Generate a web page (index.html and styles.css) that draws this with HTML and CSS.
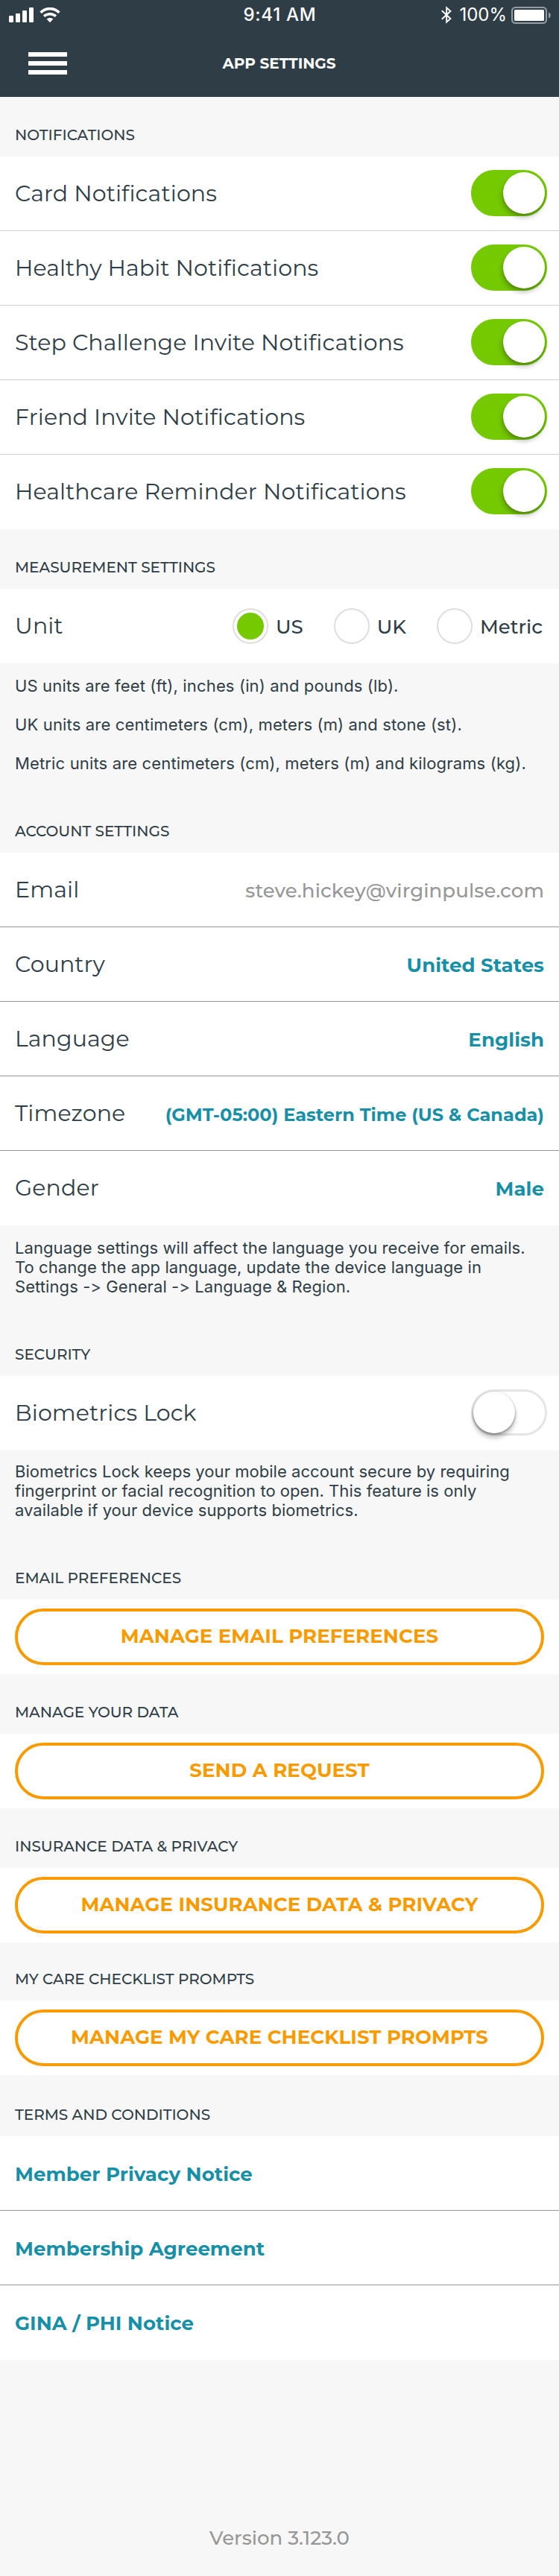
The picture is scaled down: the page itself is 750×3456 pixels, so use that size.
FILE: index.html
```
<!DOCTYPE html>
<html lang="en">
<head>
<meta charset="utf-8">
<title>App Settings</title>
<link rel="stylesheet" href="styles.css">
</head>
<body>
<header class="header">
  <div class="status">
    <div class="status-left">
      <svg class="signal" width="33" height="20" viewBox="0 0 33 20" fill="#fff"><rect x="0" y="11" width="6" height="9" rx="1.3"/><rect x="9" y="8" width="6" height="12" rx="1.3"/><rect x="18" y="4" width="6" height="16" rx="1.3"/><rect x="27" y="0" width="6" height="20" rx="1.3"/></svg>
      <svg class="wifi" width="28" height="20" viewBox="0 0 28 20"><path d="M1.6 6.900C8.600 0 19.400 0 26.400 6.900" fill="none" stroke="#fff" stroke-width="3.700"/><path d="M6 11.700C10.600 7.600 17.400 7.600 22 11.700" fill="none" stroke="#fff" stroke-width="3.500"/><path d="M14 20.200L9.600 15.600C12 13.300 16 13.300 18.400 15.600Z" fill="#fff"/></svg>
    </div>
    <div class="time">9:41 AM</div>
    <div class="status-right">
      <svg class="bluetooth" width="14" height="24" viewBox="0 0 14 24" fill="none" stroke="#fff" stroke-width="1.900"><path d="M.8 6.200L12.400 17L7.200 21.700V2.300L12.400 7L.8 17.800"/></svg>
      <span class="percent">100%</span>
      <svg class="battery" width="53" height="23" viewBox="0 0 53 23"><rect x="1" y="1" width="46" height="21" rx="4.500" fill="none" stroke="#969ea3" stroke-width="2"/><rect x="4" y="4" width="40" height="15" rx="1.500" fill="#fff"/><path d="M50 7.500C53.600 8.700 53.600 14.300 50 15.500Z" fill="#969ea3"/></svg>
    </div>
  </div>
  <div class="navbar">
    <div class="menu"><i></i><i></i><i></i></div>
    <h1 class="title">APP SETTINGS</h1>
  </div>
</header>
<main>
  <h2 class="heading">NOTIFICATIONS</h2>
  <section class="group group-light">
    <div class="row"><span class="label">Card Notifications</span><span class="toggle toggle-on"></span></div>
    <div class="row"><span class="label">Healthy Habit Notifications</span><span class="toggle toggle-on"></span></div>
    <div class="row"><span class="label">Step Challenge Invite Notifications</span><span class="toggle toggle-on"></span></div>
    <div class="row"><span class="label">Friend Invite Notifications</span><span class="toggle toggle-on"></span></div>
    <div class="row"><span class="label">Healthcare Reminder Notifications</span><span class="toggle toggle-on"></span></div>
  </section>

  <h2 class="heading">MEASUREMENT SETTINGS</h2>
  <section class="group">
    <div class="row">
      <span class="label">Unit</span>
      <div class="radios">
        <span class="option"><i class="radio radio-on"></i><span class="option-text">US</span></span>
        <span class="option"><i class="radio"></i><span class="option-text">UK</span></span>
        <span class="option"><i class="radio"></i><span class="option-text">Metric</span></span>
      </div>
    </div>
  </section>
  <div class="note note-units">
    <p>US units are feet (ft), inches (in) and pounds (lb).</p>
    <p>UK units are centimeters (cm), meters (m) and stone (st).</p>
    <p>Metric units are centimeters (cm), meters (m) and kilograms (kg).</p>
  </div>

  <h2 class="heading">ACCOUNT SETTINGS</h2>
  <section class="group">
    <div class="row"><span class="label">Email</span><span class="value value-muted">steve.hickey@virginpulse.com</span></div>
    <div class="row"><span class="label">Country</span><span class="value">United States</span></div>
    <div class="row"><span class="label">Language</span><span class="value">English</span></div>
    <div class="row"><span class="label">Timezone</span><span class="value value-small">(GMT-05:00) Eastern Time (US &amp; Canada)</span></div>
    <div class="row"><span class="label">Gender</span><span class="value">Male</span></div>
  </section>
  <p class="note">Language settings will affect the language you receive for emails.<br>To change the app language, update the device language in<br>Settings -&gt; General -&gt; Language &amp; Region.</p>

  <h2 class="heading">SECURITY</h2>
  <section class="group">
    <div class="row"><span class="label">Biometrics Lock</span><span class="toggle"></span></div>
  </section>
  <p class="note note-security">Biometrics Lock keeps your mobile account secure by requiring<br>fingerprint or facial recognition to open. This feature is only<br>available if your device supports biometrics.</p>

  <h2 class="heading">EMAIL PREFERENCES</h2>
  <section class="action"><button class="button">MANAGE EMAIL PREFERENCES</button></section>
  <h2 class="heading">MANAGE YOUR DATA</h2>
  <section class="action"><button class="button">SEND A REQUEST</button></section>
  <h2 class="heading">INSURANCE DATA &amp; PRIVACY</h2>
  <section class="action"><button class="button">MANAGE INSURANCE DATA &amp; PRIVACY</button></section>
  <h2 class="heading heading-prompts">MY CARE CHECKLIST PROMPTS</h2>
  <section class="action"><button class="button">MANAGE MY CARE CHECKLIST PROMPTS</button></section>

  <h2 class="heading heading-terms">TERMS AND CONDITIONS</h2>
  <section class="group">
    <div class="row"><a class="value">Member Privacy Notice</a></div>
    <div class="row"><a class="value">Membership Agreement</a></div>
    <div class="row"><a class="value">GINA / PHI Notice</a></div>
  </section>
</main>
<footer class="version">Version 3.123.0</footer>
</body>
</html>
```
FILE: styles.css
```
* { box-sizing: border-box; }

body {
  margin: 0;
  width: 750px;
  height: 3456px;
  display: flex;
  flex-direction: column;
  background: #f7f7f7;
  color: #2f3e46;
  font-family: Montserrat, Inter, sans-serif;
}

h1, h2, p { margin: 0; }

/* Header */
.header { height: 130px; background: #2f3e46; color: #fff; }
.status {
  height: 40px;
  padding: 0 11px 0 12px;
  display: grid;
  grid-template-columns: 1fr auto 1fr;
  align-items: center;
  font-family: Inter, sans-serif;
  font-size: 24px;
  line-height: 40px;
}
.status-left { display: flex; gap: 8px; }
.time { font-weight: 500; letter-spacing: .75px; }
.status-right { display: flex; justify-content: flex-end; align-items: center; }
.percent { margin: 0 6px 0 10px; }
.battery { margin-top: 1px; }
.navbar {
  height: 90px;
  padding: 30px 39px 0 38px;
  display: grid;
  grid-template-columns: 1fr auto 1fr;
  align-items: start;
}
.menu { display: flex; flex-direction: column; gap: 6px; }
.menu i { width: 52px; height: 6px; background: #fff; }
.title { font-size: 20px; line-height: 30px; font-weight: 700; }

/* Section headings */
.heading {
  height: 80px;
  padding: 0 20px 17px;
  display: flex;
  align-items: flex-end;
  font-size: 20px;
  line-height: 24px;
  font-weight: 500;
}
.heading-prompts { height: 78px; }
.heading-terms { height: 82px; }

/* Rows */
.group { background: #fff; }
.row {
  height: 100px;
  padding: 0 20px;
  display: flex;
  align-items: center;
  justify-content: space-between;
  box-shadow: inset 0 -1px #979797;
}
.group-light .row { box-shadow: inset 0 -1px #cfcfcf; }
.group .row:last-child { box-shadow: none; }
.label { font-size: 30px; line-height: 40px; letter-spacing: .12px; }
.value {
  padding-top: 1px;
  font-size: 26px;
  line-height: 34px;
  font-weight: 700;
  letter-spacing: .07px;
  color: #1790a7;
}
.value-muted { font-weight: 500; letter-spacing: .1px; color: #979797; }
.value-small { padding-top: 3px; font-size: 24px; letter-spacing: .03px; }

/* Switches */
.toggle {
  width: 102px;
  height: 62px;
  margin: 0 -4px 2px 0;
  padding: 1px;
  flex: none;
  display: flex;
  border: 3px solid #e5e5e5;
  border-radius: 31px;
}
.toggle::before {
  content: "";
  width: 56px;
  height: 56px;
  margin: -1px;
  border-radius: 50%;
  background: #fff;
  box-shadow: 0 6px 6px rgba(0, 0, 0, .25), 0 1px 3px rgba(0, 0, 0, .4);
}
.toggle-on {
  justify-content: flex-end;
  border-color: #74c900;
  background: #74c900;
}
.toggle-on::before { box-shadow: -1px 5px 6px rgba(0, 0, 0, .26), 0 1px 2px rgba(0, 0, 0, .15); }

/* Unit choice */
.radios { display: flex; gap: 41px; margin-right: 2px; }
.option {
  display: flex;
  align-items: center;
  gap: 10px;
  font-size: 26px;
  line-height: 34px;
  font-weight: 500;
}
.option-text { padding-top: 1px; }
.radio {
  width: 48px;
  height: 48px;
  padding: 4px;
  border: 2px solid #dedede;
  border-radius: 50%;
}
.radio-on::before {
  content: "";
  display: block;
  width: 36px;
  height: 36px;
  border-radius: 50%;
  background: #74c900;
}

/* Explanatory notes */
.note {
  height: 122px;
  padding: 17px 20px 0;
  font-family: Inter, sans-serif;
  font-size: 22px;
  line-height: 26px;
  letter-spacing: .08px;
}
.note-units {
  height: 174px;
  display: flex;
  flex-direction: column;
  gap: 26px;
  letter-spacing: .15px;
}
.note-security { height: 120px; padding-top: 15px; letter-spacing: .04px; }

/* Buttons */
.action { height: 100px; padding: 12px 20px; background: #fff; }
.button {
  width: 710px;
  height: 76px;
  padding: 0 0 2px;
  display: block;
  border: 4px solid #f99b00;
  border-radius: 38px;
  background: #fff;
  color: #f99b00;
  font: 700 26px/34px Montserrat, Inter, sans-serif;
  letter-spacing: .1px;
}

.version {
  margin-top: auto;
  padding-bottom: 34px;
  text-align: center;
  color: #979797;
  font-size: 26px;
  line-height: 34px;
  font-weight: 500;
}
```
